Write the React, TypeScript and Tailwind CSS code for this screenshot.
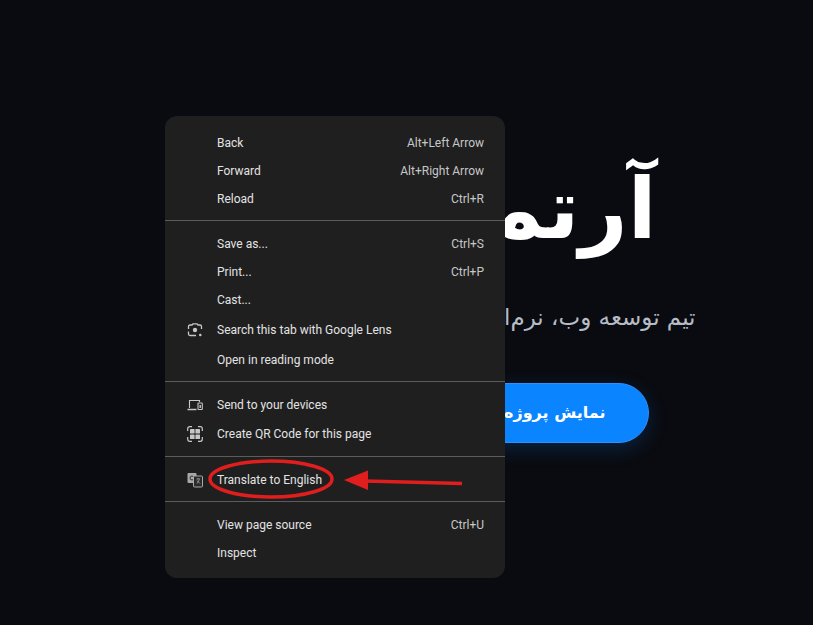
import React from 'react';

const font = "font-['Roboto','Open_Sans',sans-serif]";

const LensIcon = () => (
  <svg width="16" height="16" viewBox="0 0 16 16" fill="none" stroke="#c7c7c7" strokeWidth="1.3">
    <path d="M1.500 7V4.500A1.500 1.500 0 0 1 3 3h2l1-1.200h4L11 3h2a1.500 1.500 0 0 1 1.500 1.500V7M1.500 9.500V12A1.500 1.500 0 0 0 3 13.500h6" />
    <circle cx="8" cy="8" r="2.200" fill="#c7c7c7" stroke="none" />
    <circle cx="13.300" cy="13" r="1.300" fill="#c7c7c7" stroke="none" />
  </svg>
);

const DevicesIcon = () => (
  <svg width="16" height="16" viewBox="0 0 16 16" fill="none" stroke="#c7c7c7" strokeWidth="1.1">
    <path d="M2.500 11V3.500h10V5" />
    <path d="M0.500 12.500h9" strokeWidth="1.500" />
    <rect x="11" y="6" width="4.300" height="6.500" rx="0.600" />
    <rect x="12.500" y="8" width="1.400" height="3" fill="#c7c7c7" stroke="none" />
  </svg>
);

const QrIcon = () => (
  <svg width="16" height="16" viewBox="0 0 16 16" fill="none">
    <path d="M0.700 5V2.700a2 2 0 0 1 2-2H5M11 0.700h2.300a2 2 0 0 1 2 2V5M15.300 11v2.300a2 2 0 0 1-2 2H11M5 15.300H2.700a2 2 0 0 1-2-2V11" stroke="#c7c7c7" strokeWidth="1.200" />
    <rect x="3" y="3" width="4.600" height="4.600" rx="0.600" fill="#c7c7c7" />
    <rect x="8.400" y="3" width="4.600" height="4.600" rx="0.600" fill="#c7c7c7" />
    <rect x="3" y="8.400" width="4.600" height="4.600" rx="0.600" fill="#c7c7c7" />
    <rect x="8.400" y="8.400" width="4.600" height="4.600" rx="0.600" fill="#c7c7c7" />
  </svg>
);

const TranslateIcon = () => (
  <svg width="16" height="16" viewBox="0 0 16 16">
    <rect x="0.500" y="1" width="9" height="10" rx="1" fill="#a8a8a8" />
    <circle cx="5" cy="6" r="2" fill="none" stroke="#333333" strokeWidth="1" />
    <rect x="6.500" y="4" width="9" height="11" rx="1" fill="#2a2a2a" stroke="#a8a8a8" strokeWidth="1" />
    <path d="M9.500 7h3.500M11 6v1M12.500 7.500l-2.500 4M10 8.500l3 3" stroke="#a8a8a8" strokeWidth="0.800" fill="none" />
  </svg>
);

interface RowProps {
  label: string;
  shortcut?: string;
  icon?: React.ReactNode;
  tall?: boolean;
}

const Row = ({ label, shortcut, icon, tall }: RowProps) => (
  <div className={`${tall ? 'h-[30px]' : 'h-7'} flex items-center pl-[22px] pr-[21px]`}>
    <span className="w-[30px] shrink-0 flex items-center">{icon}</span>
    <span className="flex-1 text-[#e3e3e3]">{label}</span>
    {shortcut && <span className="text-[#c7c7c7]">{shortcut}</span>}
  </div>
);

const Sep = () => <div className="h-px bg-[#5c5c5c]" />;

export default function App() {
  return (
    <div dir="ltr" className="relative w-[813px] h-[625px] overflow-hidden bg-[#0a0b10]">
      {/* hero, partly covered by the menu */}
      <div dir="rtl" className="h-full flex flex-col items-center pt-[147px] font-['DejaVu_Sans',sans-serif]">
        <h1 className="w-[500px] h-[120px] text-[84px] leading-[124px] font-bold text-white whitespace-nowrap">آرتمیس وب</h1>
        <p className="mt-[32px] w-[578px] h-[36px] text-[23px] leading-9 text-[#b6bcc6] whitespace-nowrap">تیم توسعه وب، نرم‌افزار و طراحی رابط کاربری</p>
        <div className="mt-[48px] w-[484px] flex">
          <button className="w-[400px] h-[60px] rounded-full bg-[#0a84ff] border border-[#2f8fff] pr-[42px] text-right text-[16px] font-bold text-white shadow-[0_6px_20px_rgba(10,132,255,0.2)]">نمایش پروژه‌ها</button>
        </div>
      </div>

      {/* context menu */}
      <div className={`absolute left-[165px] top-[116px] w-[340px] h-[462px] rounded-xl bg-[#1f1f1f] pt-[13px] text-[12px] ${font}`}>
        <Row label="Back" shortcut="Alt+Left Arrow" />
        <Row label="Forward" shortcut="Alt+Right Arrow" />
        <Row label="Reload" shortcut="Ctrl+R" />
        <div className="mt-[7px] mb-[9px]"><Sep /></div>
        <Row label="Save as..." shortcut="Ctrl+S" />
        <Row label="Print..." shortcut="Ctrl+P" />
        <Row label="Cast..." />
        <div className="mt-px" />
        <Row tall label="Search this tab with Google Lens" icon={<LensIcon />} />
        <Row tall label="Open in reading mode" />
        <div className="mt-[6px] mb-[8px]"><Sep /></div>
        <Row tall label="Send to your devices" icon={<DevicesIcon />} />
        <Row label="Create QR Code for this page" icon={<QrIcon />} />
        <div className="mt-[8px] mb-[8px]"><Sep /></div>
        <Row tall label="Translate to English" icon={<TranslateIcon />} />
        <div className="mt-[6px] mb-[9px]"><Sep /></div>
        <Row label="View page source" shortcut="Ctrl+U" />
        <Row label="Inspect" />
      </div>

      {/* red annotation */}
      <svg className="absolute left-[200px] top-[450px]" width="280" height="60" viewBox="0 0 280 60" fill="none">
        <ellipse cx="71" cy="29" rx="61" ry="18" stroke="#e01e1e" strokeWidth="3.500" />
        <path d="M262 33.500L165 31" stroke="#e01e1e" strokeWidth="3.500" />
        <path d="M144 30L168 20.500V40Z" fill="#e01e1e" />
      </svg>
    </div>
  );
}
